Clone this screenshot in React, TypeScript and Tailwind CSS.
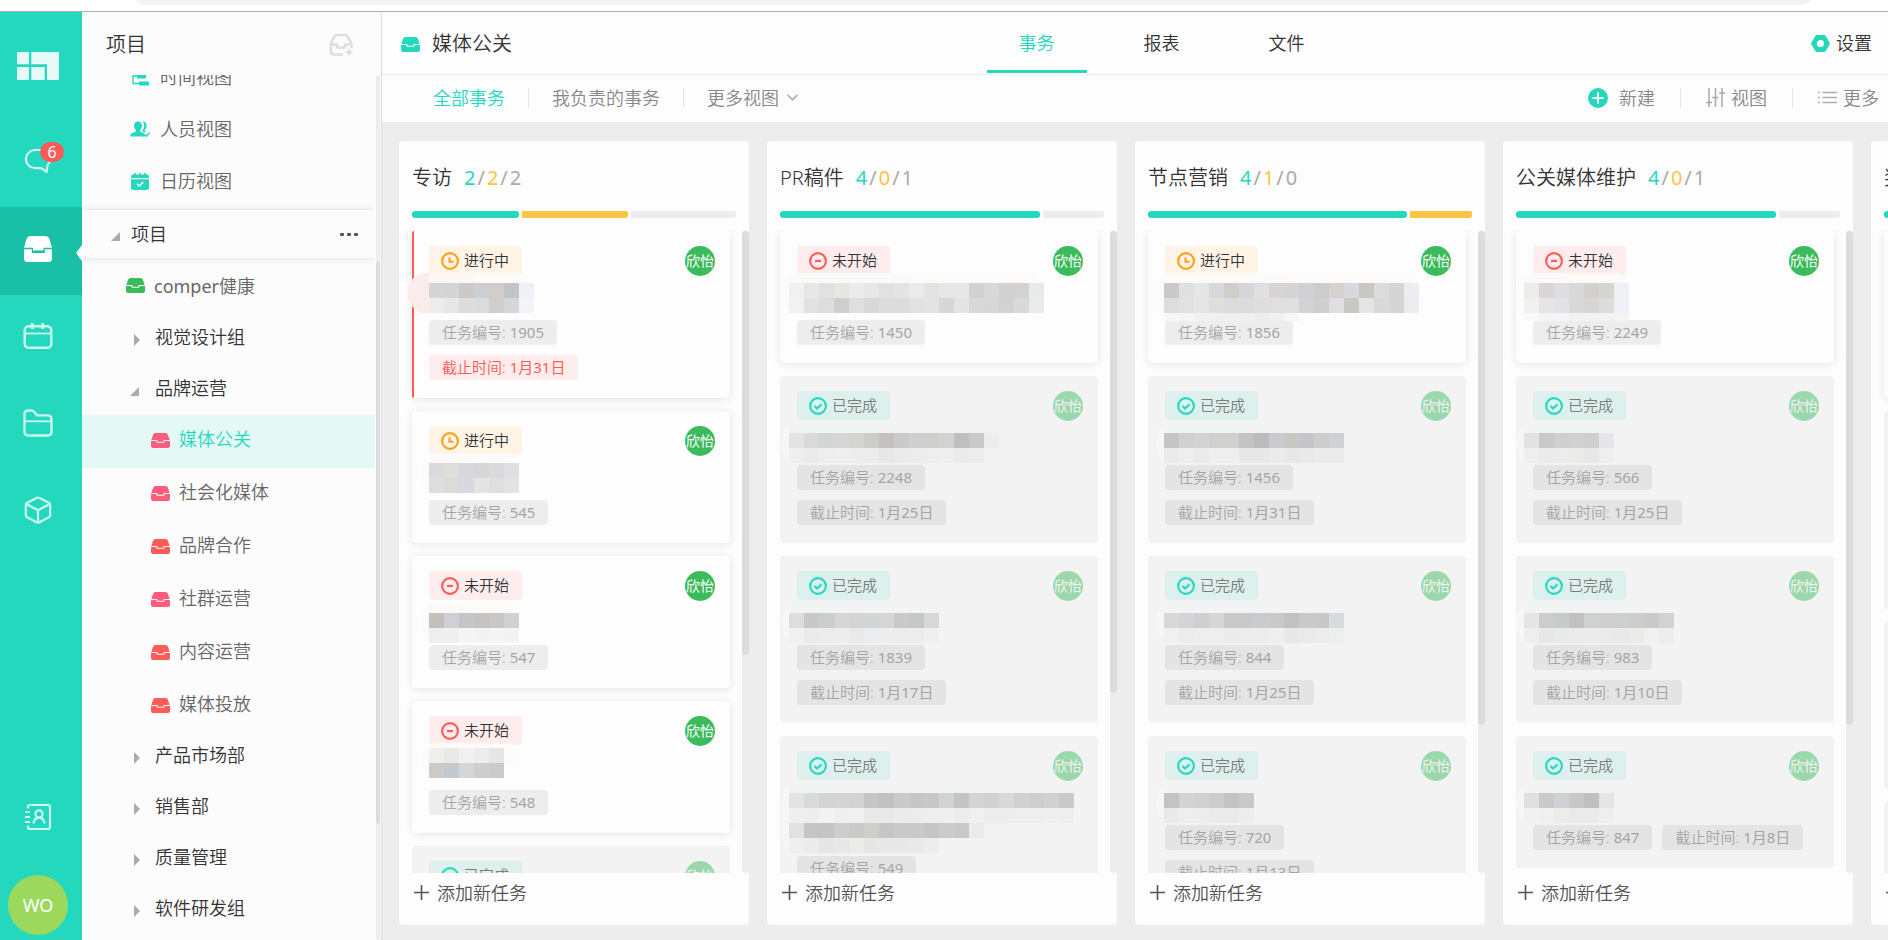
import React from "react";

type Status = "doing" | "todo" | "done";

interface Mosaic {
  x: number;
  y: number;
  rows: string[][];
}

interface Task {
  status: Status;
  id: string;
  due?: string;
  overdue?: boolean;
  lines?: number;
  mosaic?: Mosaic;
}

interface BoardColumn {
  title: string;
  done: number;
  doing: number;
  todo: number;
  bars: { size: number; tone: string }[];
  thumb: number;
  tasks: Task[];
}

const split = (s: string) => s.split(" ").filter(Boolean);

const GREEN = "rounded-[3px] bg-[#24d8bd]";
const YELLOW = "rounded-r-[2px] bg-[#ffc444]";
const GREY = "rounded-r-[2px] bg-[#ededed]";

const COLUMNS: BoardColumn[] = [
  {
    title: "专访",
    done: 2,
    doing: 2,
    todo: 2,
    bars: [
      { size: 107, tone: GREEN },
      { size: 106, tone: YELLOW },
      { size: 105, tone: GREY },
    ],
    thumb: 66,
    tasks: [
      {
        status: "doing",
        id: "1905",
        due: "1月31日",
        overdue: true,
        mosaic: {
          x: 0,
          y: 8,
          rows: [
            split("d6d5d3 d3d4d6 cbcac8 cdced2 d1cdcc c3c4c6 eff1f4"),
            split("eeebe9 e5e7eb dddcdb dadbde d0cfcd d4d6d9 f3f4f7"),
          ],
        },
      },
      {
        status: "doing",
        id: "545",
        mosaic: {
          x: 0,
          y: 8,
          rows: [
            split("dadadc dfddd9 d7d7dc d7d6d7 dadadc dedfe1"),
            split("dededf dcdbd8 d8d9de e4e4e5 dfdee0 e2e3e5"),
          ],
        },
      },
      {
        status: "todo",
        id: "547",
        mosaic: {
          x: 0,
          y: 13,
          rows: [
            split("c3bfbb cfd0d5 c6c5c7 c5c4c2 c8c7c6 d0d1d4"),
            split("eeeeee efeff0 f5f5f5 f3f3f3 f4f4f4 f3f3f3"),
          ],
        },
      },
      {
        status: "todo",
        id: "548",
        mosaic: {
          x: 0,
          y: 3,
          rows: [
            split("efefec e9e9ea f0f0f1 ededee e7e6e7 fbfdfd"),
            split("cdcac8 c4c9cd d5d6d7 cdcdce cbcbcb fcfdfd"),
          ],
        },
      },
      { status: "done", id: "612", due: "1月20日" },
    ],
  },
  {
    title: "PR稿件",
    done: 4,
    doing: 0,
    todo: 1,
    bars: [
      { size: 260, tone: GREEN },
      { size: 61, tone: GREY },
    ],
    thumb: 72,
    tasks: [
      {
        status: "todo",
        id: "1450",
        mosaic: {
          x: -8,
          y: 8,
          rows: [
            split(
              "f1f1ef e7e7e5 e1e1e2 e6e6e4 ebebec e7e7e7 e1e1e2 e4e4e5 eaeaea e3e3e2 e7e7e8 e7e7e8 d1d1d2 d8d8d8 d2d1d0 d3d2d1 e7e9ec",
            ),
            split(
              "f2f2f0 e1e1e2 dddddd d1cfcd dfdfe0 d7d9d8 dcdcda dcdcdc e1e1e1 e5e3e2 d7d7da e2e4e7 d8d8d8 d9d7d5 d2d2d1 d8dad9 e8ebec",
            ),
          ],
        },
      },
      {
        status: "done",
        id: "2248",
        due: "1月25日",
        mosaic: {
          x: -8,
          y: 13,
          rows: [
            split("e3e3e1 dadada d4d6d5 d6d6d6 d4d4d2 cccccb c4c2c0 cacacb cfcfcf cfcfcc d2d2d2 bfbfbf c9c9c9 eceeed"),
            split("efefef ebebeb eeeeee efefef ededed ececec e8e8e8 ebebeb ececec eeeeee efefef ebebeb ececec"),
          ],
        },
      },
      {
        status: "done",
        id: "1839",
        due: "1月17日",
        mosaic: {
          x: -8,
          y: 13,
          rows: [
            split("dedcdd c7c8c8 cbcdcc d6d6d5 d6d4d2 d3d5d7 d6d6d6 cbc9c7 c6c8c7 d6d8da"),
            split("f0f0f0 eaeaea ececec ededed e9e9e9 ebeced ededed ececec ebeceb eef0f0"),
          ],
        },
      },
      {
        status: "done",
        id: "549",
        lines: 2,
        mosaic: {
          x: -8,
          y: 13,
          rows: [
            split(
              "e3e3e1 d9dada d3d5d4 d5d5d5 d3d3d3 c7c6c5 c2c2c2 cacac9 c6c6c6 c8c7c6 d0d3d2 c3c5c4 d4d4d2 cfd1d3 d9d9da d1d1d3 cdced2 d1d1d1 cacaca",
            ),
            split(
              "efefef ededed f2f2f2 efefef f0f0f0 e9e9e9 e9e9e9 ebebeb ececec eeeeee efefef ececec f0f0ef ededed ededed eeeeee eeeeee efefef eeeeee",
            ),
            split("e1e1df c5c5c4 c5c4c3 cdcdcd cacac9 cfceca c7c6c5 cacaca cacaca c4c6c6 cacbca c9c9c9 e9eceb"),
            split("efefef ebebeb e6e6e6 e8e8e8 ebebe9 e6e6e4 e7e8e7 e8e8e8 e9e9e8 ecedec"),
          ],
        },
      },
    ],
  },
  {
    title: "节点营销",
    done: 4,
    doing: 1,
    todo: 0,
    bars: [
      { size: 260, tone: GREEN },
      { size: 62, tone: YELLOW },
    ],
    thumb: 77,
    tasks: [
      {
        status: "doing",
        id: "1856",
        mosaic: {
          x: -1,
          y: 8,
          rows: [
            split(
              "cac9c7 dee0e3 e6e6e4 d7d8dc d1cdcb d4d6da dee1e0 d6d4d4 d6d4d2 d0d1d4 cdcdce d6d2d0 d7d9dc c8c7c4 dbdbdc d5d5d5 ecedf0",
            ),
            split(
              "dedddc dfe1e2 e5e5e6 dfded9 d8dcdd dbdbdc dedede e2dedd dfe0e1 d3d3d4 cfcfcd dfdfe1 c9c8c4 e4e6e5 d9d9d9 d4d4d4 ebecef",
            ),
            split("f7f7f6 f5f5f5 f1f1f1 f0f0f0 efefef f0f0f0 eeeeee f1f1f1 f6f6f6"),
          ],
        },
      },
      {
        status: "done",
        id: "1456",
        due: "1月31日",
        mosaic: {
          x: -1,
          y: 13,
          rows: [
            split("c8c6c5 d0d2d1 d3d3d3 d0d0cf d0d0cf c3c3c3 bcbcbc c9cbce c9c7c4 c5c6c9 cdcdce ced0d3"),
            split("ebebeb eeeeee eaeaea efefef eeeeee e8e8e8 e8e8e8 ebebeb e8e8e8 e9e9e9 ebebeb ebebeb"),
          ],
        },
      },
      {
        status: "done",
        id: "844",
        due: "1月25日",
        mosaic: {
          x: -1,
          y: 13,
          rows: [
            split("dad8d6 d2d4d7 cfcfcf d6d6d4 c9c9c9 c7c9cb c9cbce c9c9c9 c2c2c2 c9c9c9 cac8c6 d8dadd"),
            split("f0f0ef ececec eeeeee eeeeee ebebeb ececec ececec eeeeee e8e8e8 e9ebea ebedec edefee"),
          ],
        },
      },
      {
        status: "done",
        id: "720",
        due: "1月13日",
        mosaic: {
          x: -1,
          y: 13,
          rows: [
            split("c5c3c2 d3d3d3 d1d1d1 cecccb c5c3c1 c8c9ce"),
            split("e9e9e9 eeeeee ededed ebebeb eaeaea ededed"),
          ],
        },
      },
    ],
  },
  {
    title: "公关媒体维护",
    done: 4,
    doing: 0,
    todo: 1,
    bars: [
      { size: 260, tone: GREEN },
      { size: 61, tone: GREY },
    ],
    thumb: 77,
    tasks: [
      {
        status: "todo",
        id: "2249",
        mosaic: {
          x: -9,
          y: 8,
          rows: [
            split("ececeb d8d6d7 dddde0 d9d9da d2d1d0 d5d4d3 eef0f4"),
            split("f0f0ef e6e4e5 e1e2e5 d8d8d8 d7d6d5 dddcd9 edf0f4"),
            split("f9f9f9 f4f4f4 f4f4f4 f1f1f1 f2f2f2 f3f3f3 f4f4f4"),
          ],
        },
      },
      {
        status: "done",
        id: "566",
        due: "1月25日",
        mosaic: {
          x: -9,
          y: 13,
          rows: [split("e3e2e0 c8c9cb cfcfcf d1d1d1 cfcfcf e6e6e8"), split("efefef ebebeb ececec ebebea e7e7e7 eeefee")],
        },
      },
      {
        status: "done",
        id: "983",
        due: "1月10日",
        mosaic: {
          x: -9,
          y: 13,
          rows: [
            split("e5e5e4 cecccb c9cacc c3c1c0 cfd0d2 d1cfcd cdcfce cccecd cbc9c8 d1d2d4"),
            split("eeeeee e7e7e7 e8eae9 eaeaea ebebeb eaeaea e9e9e9 ebecea f0f0f0 ededed"),
          ],
        },
      },
      {
        status: "done",
        id: "847",
        due: "1月8日",
        mosaic: {
          x: -9,
          y: 13,
          rows: [split("e0e0e0 cbcac8 d0d1d4 c9c8c7 c0c0c0 e5e5e5"), split("f1f1f1 f0f0f0 ecece9 eaeaea ebebeb eeeeee")],
        },
      },
    ],
  },
  {
    title: "奖项申报",
    done: 4,
    doing: 0,
    todo: 1,
    bars: [
      { size: 260, tone: GREEN },
      { size: 61, tone: GREY },
    ],
    thumb: 77,
    tasks: [
      { status: "todo", id: "2250", due: "2月10日" },
      { status: "done", id: "1460", due: "1月22日", lines: 2 },
      { status: "done", id: "985", due: "1月14日" },
      { status: "done", id: "722", due: "1月11日" },
    ],
  },
];

function InboxSolid({ className }: { className: string }) {
  return (
    <svg viewBox="0 0 19 15" className={className} fill="currentColor" preserveAspectRatio="none" aria-hidden="true">
      <path d="M4.4 0h10.200q1.700 0 2.200 1.600l1.900 5.300h-5.700q-.5 0-.5.500v.800q0 .5-.5.500H7q-.5 0-.5-.5v-.8q0-.5-.5-.5H.3l1.900-5.300Q2.700 0 4.400 0Z" />
      <path d="M0 7.900h5.400v.900q0 1 1 1h6.200q1 0 1-1v-.9H19V13q0 2-2 2H2q-2 0-2-2Z" />
    </svg>
  );
}

function RailInbox() {
  return (
    <svg viewBox="0 0 28 26" className="h-[26px] w-7" fill="currentColor" aria-hidden="true">
      <path d="M6.500 0h15q3 0 3.800 2.600L28 11.800h-8.500v2.800H9v-2.800H0l2.700-9.200Q3.500 0 6.500 0Z" />
      <path d="M0 13.200h7.800V17h13v-3.800H28v9.300q0 3.500-3.500 3.500h-21Q0 26 0 22.500Z" />
    </svg>
  );
}

const RAIL_STROKE = "text-[#cdf7f0]";

function ChatIcon() {
  return (
    <svg viewBox="0 0 28 26" className={`h-[26px] w-7 ${RAIL_STROKE}`} fill="none" stroke="currentColor" strokeWidth="2.200" strokeLinejoin="round" aria-hidden="true">
      <path d="M11 2h6a9 9 0 0 1 6.500 15.200L22.600 24l-5.200-3.800H11A9.100 9.100 0 0 1 11 2Z" />
    </svg>
  );
}

function CalendarIcon() {
  return (
    <svg viewBox="0 0 30 28" className={`h-7 w-[30px] ${RAIL_STROKE}`} fill="none" stroke="currentColor" strokeWidth="2.400" aria-hidden="true">
      <rect x="1.700" y="4.200" width="26.600" height="21.600" rx="4" />
      <path d="M2 11.500h26" strokeWidth="1.800" />
      <path d="M9.300 1v6M19.700 1v6" strokeWidth="2.800" />
    </svg>
  );
}

function FolderIcon() {
  return (
    <svg viewBox="0 0 30 28" className={`h-7 w-[30px] ${RAIL_STROKE}`} fill="none" stroke="currentColor" strokeWidth="2.300" strokeLinejoin="round" aria-hidden="true">
      <path d="M1.500 23V5q0-3.500 3.500-3.500h3.600q1.400 0 2.400 1.200l3.200 3.700h10.300q4 0 4 4V23q0 3.500-3.500 3.500H5q-3.500 0-3.500-3.500Z" />
      <path d="M1.500 12.300h27" strokeWidth="1.800" />
    </svg>
  );
}

function CubeIcon() {
  return (
    <svg viewBox="0 0 28 28" className={`h-7 w-7 ${RAIL_STROKE}`} fill="none" stroke="currentColor" strokeWidth="2.200" strokeLinejoin="round" aria-hidden="true">
      <path d="m12.500 1.900-9.300 4.800Q1.800 7.500 1.800 9v10q0 1.500 1.400 2.300l9.300 4.900q1.500.8 3 0l9.300-4.900q1.400-.8 1.400-2.300V9q0-1.500-1.400-2.300l-9.300-4.800q-1.500-.8-3 0Z" />
      <path d="m2.800 8.300 11.200 6 11.200-6M14 14.300V26" />
    </svg>
  );
}

function ContactsIcon() {
  return (
    <svg viewBox="0 0 28 28" className={`h-7 w-7 ${RAIL_STROKE}`} fill="none" stroke="currentColor" strokeWidth="2.200" aria-hidden="true">
      <path d="M4 5.500V4q0-2 2-2h18q2 0 2 2v20q0 2-2 2H6q-2 0-2-2v-1.500" />
      <path d="M1 9h5M1 14h5M1 19h5" />
      <circle cx="15" cy="11" r="3.600" />
      <path d="M9.500 20.500q.5-5.500 5.500-5.800 5 .3 5.500 5.800" />
    </svg>
  );
}

function AddInboxIcon() {
  return (
    <svg viewBox="0 0 24 24" className="h-6 w-6" fill="none" stroke="currentColor" strokeWidth="2.600" strokeLinejoin="round" aria-hidden="true">
      <path d="M14 21.500H4.500q-2.500 0-2.500-2.500v-8.500L5 4q.8-2 3-2h8q2.200 0 3 2l3.500 6.500V15" />
      <path d="M2 11.500h6v3h8v-3h6.500" />
      <path d="m20 15 1.300 3 3 1.300-3 1.300L20 23.600l-1.300-3-3-1.300 3-1.300Z" fill="currentColor" stroke="none" />
    </svg>
  );
}

function TimelineIcon() {
  return (
    <svg viewBox="0 0 18 18" className="h-[18px] w-[18px]" aria-hidden="true">
      <path d="M2 1v14.500h6M2 8h4" fill="none" stroke="currentColor" strokeWidth="1.400" />
      <path d="M1 1h9v4H1zM6 6.500h9v4H6zM8 13.500h10v4H8z" fill="currentColor" />
    </svg>
  );
}

function PeopleIcon() {
  return (
    <svg viewBox="0 0 20 17" className="h-[17px] w-5" fill="currentColor" aria-hidden="true">
      <path d="M8 .5c2.500 0 4 1.800 4 4.300 0 1.900-.8 3.400-1.900 4.300v1.300l3.600 1.800q1.300.8 1.300 2.300v1H.3v-1q0-1.500 1.400-2.300l4.200-1.800V9.100C4.800 8.200 4 6.700 4 4.800 4 2.300 5.500.5 8 .5Z" />
      <path d="M12.300.6c2.700-.3 4.300 1.500 4.300 4 0 1.900-.8 3.400-1.800 4.300v1l.9.600-1.300 1.300-1.900-1.300V9c1.300-1.200 1.800-2.700 1.600-4.500-.1-1.600-.7-2.900-1.800-3.900Z" />
      <path d="m14.700 13.500 1.700 1.700 3.200-3.400" fill="none" stroke="currentColor" strokeWidth="1.400" />
    </svg>
  );
}

function DateIcon() {
  return (
    <svg viewBox="0 0 18 18" className="h-[18px] w-[18px]" aria-hidden="true">
      <path d="M2 2.500h1.200V1h1.600v1.500h3.400V1h1.600v1.500h3.400V1h1.600v1.500H16q2 0 2 2V6H0V4.500q0-2 2-2Z" fill="currentColor" />
      <path d="M0 7.200h18V16q0 2-2 2H2q-2 0-2-2Z" fill="currentColor" />
      <path d="m6 11.800 2.300 2.200 4-4" fill="none" stroke="#fff" strokeWidth="1.400" />
    </svg>
  );
}

function StatusIcon({ status }: { status: Status }) {
  return (
    <svg viewBox="0 0 18 18" className="h-[18px] w-[18px] shrink-0" fill="none" stroke="currentColor" strokeWidth="2.100" aria-hidden="true">
      <circle cx="9" cy="9" r="7.900" />
      {status === "doing" && <path d="M8.500 5.500v4.300h4" />}
      {status === "todo" && <path d="M6 9h6" />}
      {status === "done" && <path d="m5.500 9 2.600 2.500 4.400-4.300" />}
    </svg>
  );
}

const STATUS: Record<Status, { label: string; box: string; icon: string; text: string }> = {
  doing: { label: "进行中", box: "bg-[#fff4e5]", icon: "text-[#ff9f1c]", text: "text-[#333]" },
  todo: { label: "未开始", box: "bg-[#ffecec]", icon: "text-[#ff5b57]", text: "text-[#333]" },
  done: { label: "已完成", box: "bg-[#ddf0ed]", icon: "text-[#24d8bd]", text: "text-[#7c7c7c]" },
};

function MosaicPatch({ mosaic, done, tint }: { mosaic: Mosaic; done: boolean; tint: boolean }) {
  const cols = Math.max(...mosaic.rows.map((r) => r.length));
  const w = cols * 15;
  const h = Math.min(mosaic.rows.length * 15, mosaic.rows.length === 3 ? 38 : 60);
  const halo = tint ? "#fbecec" : done ? "#f6f6f6" : "#fafafa";
  const pad = tint ? 21 : 8;
  const lift = Math.min(mosaic.y + 2, 10);
  return (
    <svg
      className="absolute overflow-visible"
      style={{ left: mosaic.x, top: mosaic.y }}
      width={w}
      height={h}
      aria-hidden="true"
    >
      <rect x={-pad} y={-lift} width={w / 2 + pad} height={h + lift} rx={18} fill={halo} opacity={tint ? 1 : 0.8} />
      <rect x={0} y={-lift} width={w - 6} height={lift + 2} rx={4} fill={done ? "#f1f3f2" : "#fdfaf7"} opacity={0.8} />
      <g shapeRendering="crispEdges">
        {mosaic.rows.map((row, r) =>
          row.map((c, i) => (
            <rect key={`${r}-${i}`} x={i * 15} y={r * 15} width={15} height={Math.min(15, h - r * 15)} fill={`#${c}`} />
          )),
        )}
      </g>
    </svg>
  );
}

function Tag({ label, value, tone }: { label: string; value: string; tone: string }) {
  return (
    <span className={`mr-2.5 mb-2.5 flex h-[25px] items-center gap-1 rounded px-[13px] text-[15px] whitespace-nowrap ${tone}`}>
      <span>{label}:</span>
      <span className="font-normal">{value}</span>
    </span>
  );
}

function TaskCard({ task }: { task: Task }) {
  const s = STATUS[task.status];
  const done = task.status === "done";
  const tagTone = done ? "bg-[#e4e4e4] text-[#a5a5a5]" : "bg-[#ededed] text-[#a5a5a5]";
  return (
    <li
      className={`relative shrink-0 rounded pt-[15px] pr-[15px] pb-2 pl-[17px] ${
        done ? "bg-[#f3f3f3]" : "bg-[#fdfdfd] shadow-[0_1px_8px_rgba(0,0,0,0.1)]"
      }`}
    >
      {task.overdue && <span className="absolute inset-y-0 left-0 w-0.5 rounded-l bg-[#ff5b57]" />}
      <div className="flex h-[29px] items-start justify-between">
        <span className={`flex h-[29px] items-center gap-[5px] rounded pr-[13px] pl-3 text-[15px] ${s.box}`}>
          <span className={s.icon}>
            <StatusIcon status={task.status} />
          </span>
          <span className={s.text}>{s.label}</span>
        </span>
        <span
          className={`flex h-[30px] w-[30px] items-center justify-center rounded-full text-sm font-normal whitespace-nowrap ${
            done ? "bg-[#9ad8ab] text-[#f3f3f3]" : "bg-[#3cbb5c] text-white"
          }`}
        >
          欣怡
        </span>
      </div>
      <div className={`relative ${task.lines === 2 ? "h-[76px]" : "h-[45px]"}`}>
        {task.mosaic && <MosaicPatch mosaic={task.mosaic} done={done} tint={!!task.overdue} />}
      </div>
      <div className="flex flex-wrap">
        <Tag label="任务编号" value={task.id} tone={tagTone} />
        {task.due && (
          <Tag label="截止时间" value={task.due} tone={task.overdue ? "bg-[#ffecec] text-[#ff5b57]" : tagTone} />
        )}
      </div>
    </li>
  );
}

function Column({ column }: { column: BoardColumn }) {
  return (
    <section className="flex w-[350px] shrink-0 flex-col rounded bg-[#fdfdfd]">
      <header className="px-[13px] pt-[22px]">
        <div className="flex h-[30px] items-center gap-3 text-xl whitespace-nowrap">
          <h2 className="text-[#333]">{column.title}</h2>
          <p className="flex gap-0.5 font-normal text-[#a9a9a9]">
            <span className="text-[#24d8bd]">{column.done}</span>/<span className="text-[#ffc444]">{column.doing}</span>/
            <span>{column.todo}</span>
          </p>
        </div>
        <div className="mt-[18px] flex h-[7px] gap-[3px]">
          {column.bars.map((b, i) => (
            <span key={i} className={b.tone} style={{ flex: `${b.size} 0 0` }} />
          ))}
        </div>
      </header>
      <div className="mt-[13px] flex min-h-0 flex-1">
        <ul className="-ml-2 flex min-w-0 flex-1 flex-col gap-[13px] overflow-hidden pr-3 pl-[21px]">
          {column.tasks.map((t) => (
            <TaskCard key={t.id} task={t} />
          ))}
        </ul>
        <div className="w-[7px] rounded-full bg-[#ededed]">
          <div className="rounded-full bg-[#dcdcdc]" style={{ height: `${column.thumb}%` }} />
        </div>
      </div>
      <button type="button" className="flex h-[52px] shrink-0 items-start gap-2 pt-[7px] pl-[15px] text-lg leading-[26px] text-[#555]">
        <svg viewBox="0 0 15 15" className="mt-[5px] h-[15px] w-[15px]" stroke="currentColor" strokeWidth="1.600" aria-hidden="true">
          <path d="M0 7.500h15M7.500 0v15" />
        </svg>
        添加新任务
      </button>
    </section>
  );
}

function Group({ label, open }: { label: string; open?: boolean }) {
  return (
    <a href="#" className="flex h-[51px] items-center pb-1 pl-12 text-[#333]">
      <svg viewBox="0 0 10 12" className="mt-1.5 mr-[15px] h-3 w-2.5 text-[#ababad]" fill="currentColor" aria-hidden="true">
        {open ? <path d="M9 2v9H0Z" /> : <path d="M4 0v12l6-6Z" />}
      </svg>
      {label}
    </a>
  );
}

function Project({ label, color, active }: { label: string; color: string; active?: boolean }) {
  return (
    <a
      href="#"
      className={`flex h-[53px] items-center gap-[9px] pb-1.5 pl-[69px] ${
        active ? "bg-[#e4f8f5] text-[#24d8bd]" : "text-[#666]"
      }`}
    >
      <InboxSolid className={`mt-1 h-[15px] w-[19px] ${color}`} />
      {label}
    </a>
  );
}

function ViewLink({ label, icon }: { label: string; icon: React.ReactNode }) {
  return (
    <a href="#" className="flex h-[52px] shrink-0 items-center pl-12 text-[#666]">
      <span className="mr-2.5 flex w-5 justify-center text-[#24d8bd]">{icon}</span>
      {label}
    </a>
  );
}

function Rail() {
  const item = "flex h-[87px] w-full items-center justify-center pb-1.5";
  return (
    <nav className="flex w-[82px] shrink-0 flex-col bg-[#24d8bd] pr-1.5">
      <div className="flex h-[108px] items-start pt-10 pl-[17px]">
        <svg viewBox="0 0 42 28" className="h-7 w-[42px]" fill="#e6faf7" aria-hidden="true">
          <path d="M0 0h12v12.300H0zM14.300 0H42v28H30V12.300H14.300zM0 15h12v13H0zM14.300 15H27.700v13H14.300z" />
        </svg>
      </div>
      <button type="button" aria-label="消息" className={`relative ${item}`}>
        <ChatIcon />
        <span className="absolute top-[22px] left-10 flex h-5 w-6 items-center justify-center rounded-full bg-[#ff5b57] text-base leading-5 font-normal text-white">
          6
        </span>
      </button>
      <div className="-mr-1.5 bg-[#1abfa8]">
        <button type="button" aria-label="项目" className="relative flex h-[88px] w-full items-center justify-center pr-1.5 pb-1 text-white">
          <RailInbox />
          <svg viewBox="0 0 6 16" className="absolute top-[38px] right-0 h-4 w-1.5" fill="#fcfcfc" aria-hidden="true">
            <path d="M6 0v16L0 8Z" />
          </svg>
        </button>
      </div>
      <button type="button" aria-label="日历" className={item}>
        <CalendarIcon />
      </button>
      <button type="button" aria-label="文件" className={item}>
        <FolderIcon />
      </button>
      <button type="button" aria-label="应用" className={item}>
        <CubeIcon />
      </button>
      <button type="button" aria-label="通讯录" className="mt-auto flex h-14 w-full items-center justify-center">
        <ContactsIcon />
      </button>
      <button
        type="button"
        className="mt-[30px] mb-[5px] ml-2 flex h-[60px] w-[60px] items-center justify-center rounded-full bg-[#9bd85c] text-lg font-normal text-white"
      >
        WO
      </button>
    </nav>
  );
}

function Sidebar() {
  const pink = "text-[#ff5b7b]";
  const red = "text-[#ff5b57]";
  return (
    <aside className="flex w-[300px] shrink-0 flex-col border-r border-[#dcdcdc] bg-[#fcfcfc] text-lg">
      <div className="flex h-[63px] shrink-0 items-center justify-between pt-0.5 pr-7 pl-6">
        <h1 className="text-xl text-[#333]">项目</h1>
        <button type="button" aria-label="新建项目" className="text-[#dedede]">
          <AddInboxIcon />
        </button>
      </div>
      <div className="flex min-h-0 flex-1">
        <div className="mr-px flex min-w-0 flex-1 flex-col overflow-hidden">
          <div className="flex h-[135px] shrink-0 flex-col justify-end overflow-hidden pb-[3px]">
            <ViewLink label="时间视图" icon={<TimelineIcon />} />
            <ViewLink label="人员视图" icon={<PeopleIcon />} />
            <ViewLink label="日历视图" icon={<DateIcon />} />
          </div>
          <div className="relative flex h-12 shrink-0 items-center pr-[17px] pl-[29px] text-[#333] shadow-[0_0_8px_rgba(0,0,0,0.12)]">
            <svg viewBox="0 0 9 9" className="mt-1 mr-[11px] h-[9px] w-[9px] text-[#ababad]" fill="currentColor" aria-hidden="true">
              <path d="M9 0v9H0Z" />
            </svg>
            <span className="flex-1">项目</span>
            <button type="button" aria-label="更多" className="flex gap-[3px]">
              <span className="h-[3px] w-[4px] rounded-[1px] bg-[#555]" />
              <span className="h-[3px] w-[4px] rounded-[1px] bg-[#555]" />
              <span className="h-[3px] w-[4px] rounded-[1px] bg-[#555]" />
            </button>
          </div>
          <div className="pt-0.5">
            <a href="#" className="flex h-[53px] items-center gap-[9px] pb-0.5 pl-11 text-[#666]">
              <InboxSolid className="h-[15px] w-[19px] text-[#3cbb5c]" />
              <span>
                <span className="font-normal">comper</span>健康
              </span>
            </a>
            <Group label="视觉设计组" />
            <Group label="品牌运营" open />
            <Project label="媒体公关" color={pink} active />
            <Project label="社会化媒体" color={pink} />
            <Project label="品牌合作" color={red} />
            <Project label="社群运营" color={pink} />
            <Project label="内容运营" color={red} />
            <Project label="媒体投放" color={red} />
            <div className="-mt-0.5">
              <Group label="产品市场部" />
              <Group label="销售部" />
              <Group label="质量管理" />
              <Group label="软件研发组" />
            </div>
          </div>
        </div>
        <div className="mr-px flex w-1 flex-col rounded-full bg-[#ededed]">
          <div className="h-[21.600%]" />
          <div className="h-[65%] rounded-full bg-[#dcdcdc]" />
        </div>
      </div>
    </aside>
  );
}

function Divider() {
  return <span className="h-[19px] w-px bg-[#e3e3e3]" />;
}

export default function App() {
  const tab = "flex h-full w-[100px] items-center justify-center border-b-[3px] pt-[3px]";
  return (
    <div className="flex h-screen flex-col overflow-hidden bg-white font-['Noto_Sans','Noto_Sans_CJK_SC',sans-serif] font-[350]">
      <div className="flex h-3 shrink-0 items-start overflow-hidden border-b border-[#b0b0b0] pr-[70px] pl-[129px]">
        <div className="-mt-[31px] h-9 flex-1 rounded-full bg-[#f1f3f4]" />
      </div>
      <div className="flex min-h-0 flex-1">
        <Rail />
        <Sidebar />
        <main className="flex min-w-0 flex-1 flex-col bg-[#ededed]">
          <header className="flex h-[63px] shrink-0 items-center justify-between border-b border-[#ebebeb] bg-[#fdfdfd] pr-4 pl-[19px] text-lg text-[#333]">
            <div className="flex items-center gap-3 pt-0.5 text-xl">
              <InboxSolid className="h-[15px] w-[19px] text-[#24d8bd]" />
              <h2>媒体公关</h2>
            </div>
            <nav className="flex h-full gap-[25px] pb-px">
              <a href="#" className={`${tab} border-[#24d8bd] text-[#24d8bd]`}>
                事务
              </a>
              <a href="#" className={`${tab} border-transparent`}>
                报表
              </a>
              <a href="#" className={`${tab} border-transparent`}>
                文件
              </a>
            </nav>
            <button type="button" className="flex items-center gap-1.5">
              <svg viewBox="0 0 19 17" className="h-[17px] w-[19px] text-[#24d8bd]" aria-hidden="true">
                <path
                  d="M5.800 0h7.400q1 0 1.500.9l3.900 6.700q.5.900 0 1.800l-3.900 6.700q-.5.900-1.500.9H5.800q-1 0-1.500-.9L.400 9.400q-.5-.9 0-1.800L4.300.900Q4.800 0 5.800 0Zm3.700 5a3.500 3.500 0 1 0 0 7 3.500 3.500 0 0 0 0-7Z"
                  fill="currentColor"
                  fillRule="evenodd"
                />
              </svg>
              设置
            </button>
          </header>
          <div className="flex h-[47px] shrink-0 items-center justify-between bg-[#fdfdfd] pr-[9px] pb-0.5 pl-[51px] text-lg text-[#888]">
            <div className="flex items-center gap-[23px]">
              <a href="#" className="text-[#24d8bd]">
                全部事务
              </a>
              <Divider />
              <a href="#">我负责的事务</a>
              <Divider />
              <button type="button" className="flex items-center gap-2">
                更多视图
                <svg viewBox="0 0 11 7" className="h-[7px] w-[11px]" fill="none" stroke="#a5a5a5" strokeWidth="1.500" aria-hidden="true">
                  <path d="m.5.700 5 5 5-5" />
                </svg>
              </button>
            </div>
            <div className="flex items-center gap-[25px]">
              <button type="button" className="flex items-center gap-[11px]">
                <svg viewBox="0 0 20 20" className="h-5 w-5" aria-hidden="true">
                  <circle cx="10" cy="10" r="10" fill="#24d8bd" />
                  <path d="M4.500 10h11M10 4.500v11" stroke="#fff" strokeWidth="2" />
                </svg>
                新建
              </button>
              <Divider />
              <button type="button" className="flex items-center gap-1.5">
                <svg viewBox="0 0 19 19" className="h-[19px] w-[19px]" fill="none" stroke="#a9a9a9" strokeWidth="1.500" aria-hidden="true">
                  <path d="M3 0v19M9.500 0v19M16 0v19M0 14.500h6M6.500 9.500h6M13 5h6" />
                </svg>
                视图
              </button>
              <Divider />
              <button type="button" className="flex items-center gap-1.5">
                <svg viewBox="0 0 19 13" className="h-[13px] w-[19px]" fill="none" stroke="#b0b0b0" strokeWidth="1.500" aria-hidden="true">
                  <path d="M0 1.500h2M4.500 1.500H19M0 6.500h2M4.500 6.500H19M0 11.500h2M4.500 11.500H19" />
                </svg>
                更多
              </button>
            </div>
          </div>
          <div className="flex min-h-0 flex-1 gap-[18px] overflow-hidden pt-[19px] pb-[15px] pl-[17px]">
            {COLUMNS.map((c) => (
              <Column key={c.title} column={c} />
            ))}
          </div>
        </main>
      </div>
    </div>
  );
}
